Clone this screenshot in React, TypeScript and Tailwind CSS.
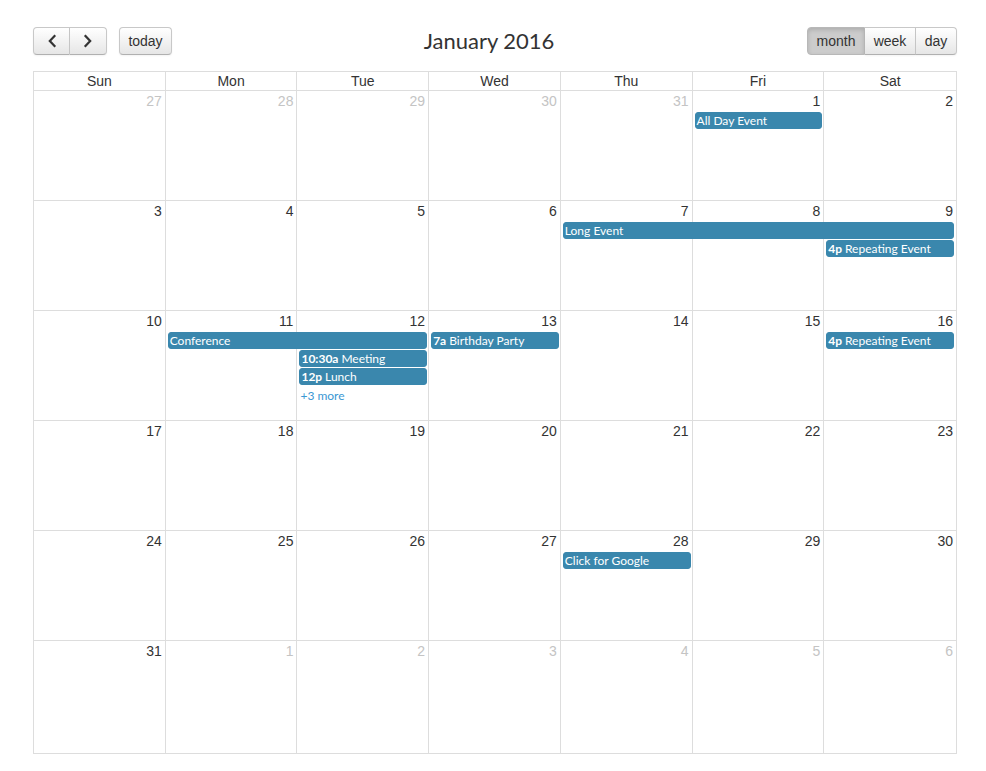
import React from "react";

type Ev = { col: string; span: string; row: string; time?: string; title: string };

const weeks: { days: { n: number; other: boolean }[]; events: Ev[]; h: string }[] = [
  {
    days: [27, 28, 29, 30, 31, 1, 2].map((n, i) => ({ n, other: i < 5 })),
    events: [{ col: "col-start-6", span: "col-span-1", row: "row-start-1", title: "All Day Event" }],
    h: "h-[110px]",
  },
  {
    days: [3, 4, 5, 6, 7, 8, 9].map((n) => ({ n, other: false })),
    events: [
      { col: "col-start-5", span: "col-span-3", row: "row-start-1", title: "Long Event" },
      { col: "col-start-7", span: "col-span-1", row: "row-start-2", time: "4p", title: "Repeating Event" },
    ],
    h: "h-[110px]",
  },
  {
    days: [10, 11, 12, 13, 14, 15, 16].map((n) => ({ n, other: false })),
    events: [
      { col: "col-start-2", span: "col-span-2", row: "row-start-1", title: "Conference" },
      { col: "col-start-4", span: "col-span-1", row: "row-start-1", time: "7a", title: "Birthday Party" },
      { col: "col-start-7", span: "col-span-1", row: "row-start-1", time: "4p", title: "Repeating Event" },
      { col: "col-start-3", span: "col-span-1", row: "row-start-2", time: "10:30a", title: "Meeting" },
      { col: "col-start-3", span: "col-span-1", row: "row-start-3", time: "12p", title: "Lunch" },
    ],
    h: "h-[110px]",
  },
  {
    days: [17, 18, 19, 20, 21, 22, 23].map((n) => ({ n, other: false })),
    events: [],
    h: "h-[110px]",
  },
  {
    days: [24, 25, 26, 27, 28, 29, 30].map((n) => ({ n, other: false })),
    events: [{ col: "col-start-5", span: "col-span-1", row: "row-start-1", title: "Click for Google" }],
    h: "h-[110px]",
  },
  {
    days: [31, 1, 2, 3, 4, 5, 6].map((n, i) => ({ n, other: i > 0 })),
    events: [],
    h: "h-[113px]",
  },
];

const dayNames = ["Sun", "Mon", "Tue", "Wed", "Thu", "Fri", "Sat"];

const btnBase =
  "h-[28px] px-[8px] text-[14px] text-[#333] border border-[#c8c8c8] border-b-[#b0b0b0] bg-gradient-to-b from-white to-[#e6e6e6] shadow-[inset_0_1px_0_rgba(255,255,255,0.2),0_1px_2px_rgba(0,0,0,0.05)] flex items-center justify-center";

function Chevron({ dir }: { dir: "left" | "right" }) {
  return (
    <svg width="10" height="14" viewBox="0 0 10 14" fill="none">
      <path
        d={dir === "left" ? "M7.5 2 L2.8 7 L7.5 12" : "M2.5 2 L7.2 7 L2.5 12"}
        stroke="#333"
        strokeWidth="2.2"
        strokeLinecap="square"
        strokeLinejoin="miter"
      />
    </svg>
  );
}

export default function App() {
  return (
    <div className="min-h-[771px] bg-white font-['Liberation_Sans',Arial,sans-serif] text-[#333]">
      <div className="ml-[33px] w-[924px] pt-[27px]">
        {/* toolbar */}
        <div className="flex items-center justify-between h-[28px] mb-[16px]">
          <div className="flex items-center gap-[12px] w-[240px]">
            <div className="flex">
              <button className={`${btnBase} w-[37px] rounded-l-[4px]`}>
                <Chevron dir="left" />
              </button>
              <button className={`${btnBase} w-[37px] rounded-r-[4px] border-l-0`}>
                <Chevron dir="right" />
              </button>
            </div>
            <button className={`${btnBase} w-[53px] rounded-[4px]`}>today</button>
          </div>
          <h2 className="font-['Lato',sans-serif] text-[22px] leading-[28px] text-[#333] mr-[12px]">January 2016</h2>
          <div className="flex w-[240px] justify-end">
            <button className="h-[28px] w-[58px] rounded-l-[4px] border border-[#b8b8b8] bg-[#cccccc] shadow-[inset_0_2px_4px_rgba(0,0,0,0.15)] text-[14px] text-[#333] flex items-center justify-center">
              month
            </button>
            <button className={`${btnBase} w-[51px] border-l-0`}>week</button>
            <button className={`${btnBase} w-[41px] rounded-r-[4px] border-l-0`}>day</button>
          </div>
        </div>

        {/* calendar */}
        <div className="border border-[#ddd]">
          <div className="grid grid-cols-7 h-[18px]">
            {dayNames.map((d, i) => (
              <div
                key={d}
                className={`text-center text-[14px] leading-[18px] text-[#333] ${i < 6 ? "border-r border-[#ddd]" : ""}`}
              >
                {d}
              </div>
            ))}
          </div>
          {weeks.map((w, wi) => (
            <div key={wi} className={`relative border-t border-[#ddd] ${w.h}`}>
              <div className="grid grid-cols-7 h-full">
                {w.days.map((d, i) => (
                  <div
                    key={i}
                    className={`text-right pr-[3px] pt-[2px] text-[14px] leading-[16px] ${
                      d.other ? "text-[#c4c4c4]" : "text-[#333]"
                    } ${i < 6 ? "border-r border-[#ddd]" : ""}`}
                  >
                    {d.n}
                  </div>
                ))}
              </div>
              {w.events.length > 0 && (
                <div className="absolute top-[21px] left-0 right-0 grid grid-cols-7 auto-rows-[18px] font-['Lato',sans-serif]">
                  {w.events.map((e, ei) => (
                    <div
                      key={ei}
                      className={`${e.col} ${e.span} ${e.row} mx-[2px] h-[17px] rounded-[3px] border border-[#3a87ad] bg-[#3a87ad] text-white text-[12px] leading-[15px] pl-[1px] whitespace-nowrap overflow-hidden`}
                    >
                      {e.time && <span className="font-bold">{e.time} </span>}
                      {e.title}
                    </div>
                  ))}
                  {wi === 2 && (
                    <div className="col-start-3 row-start-4 ml-[3px] text-[12px] leading-[19px] text-[#3b97d3]">+3 more</div>
                  )}
                </div>
              )}
            </div>
          ))}
        </div>
      </div>
    </div>
  );
}
